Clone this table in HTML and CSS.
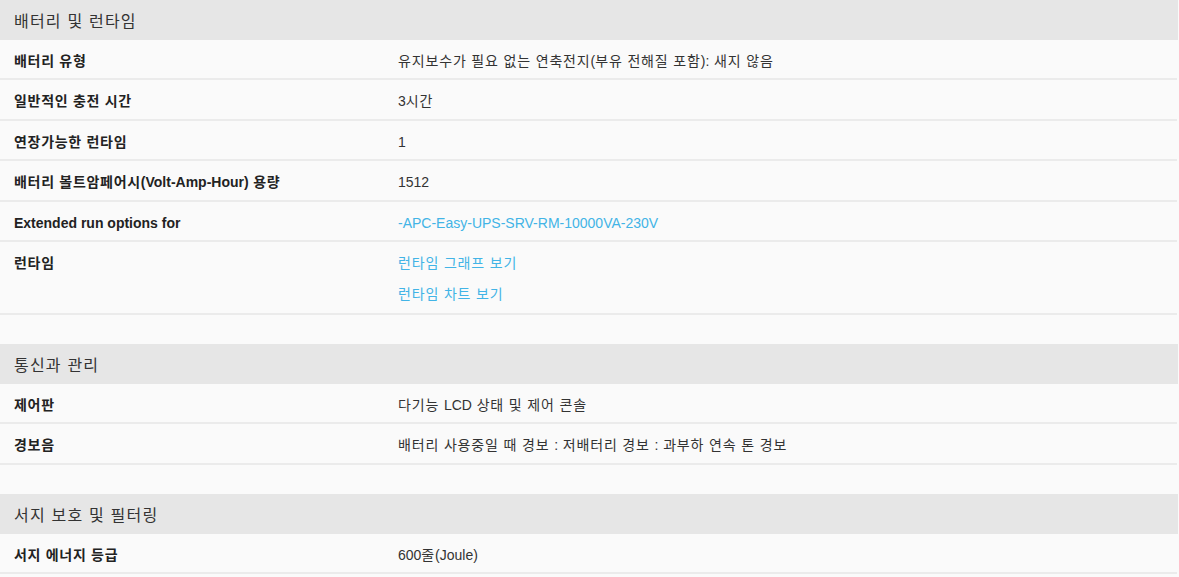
FILE: index.html
```html
<!DOCTYPE html>
<html lang="ko">
<head>
<meta charset="utf-8">
<link rel="stylesheet" href="styles.css">
</head>
<body>
<div class="specs">
  <section class="group">
    <h2 class="group-title">배터리 및 런타임</h2>
    <div class="row"><div class="label">배터리 유형</div><div class="value">유지보수가 필요 없는 연축전지<span class="lat">(</span>부유 전해질 포함<span class="lat">):</span> 새지 않음</div></div>
    <div class="row"><div class="label">일반적인 충전 시간</div><div class="value"><span class="lat">3</span>시간</div></div>
    <div class="row"><div class="label">연장가능한 런타임</div><div class="value"><span class="lat">1</span></div></div>
    <div class="row"><div class="label">배터리 볼트암페어시<span class="lat">(Volt-Amp-Hour)</span> 용량</div><div class="value"><span class="lat">1512</span></div></div>
    <div class="row"><div class="label lat">Extended run options for</div><div class="value lat"><a class="link" href="#">-APC-Easy-UPS-SRV-RM-10000VA-230V</a></div></div>
    <div class="row"><div class="label">런타임</div><div class="value links"><a class="link" href="#">런타임 그래프 보기</a><a class="link" href="#">런타임 차트 보기</a></div></div>
  </section>
  <section class="group">
    <h2 class="group-title">통신과 관리</h2>
    <div class="row"><div class="label">제어판</div><div class="value">다기능 <span class="lat">LCD</span> 상태 및 제어 콘솔</div></div>
    <div class="row"><div class="label">경보음</div><div class="value">배터리 사용중일 때 경보 <span class="lat">:</span> 저배터리 경보 <span class="lat">:</span> 과부하 연속 톤 경보</div></div>
  </section>
  <section class="group">
    <h2 class="group-title">서지 보호 및 필터링</h2>
    <div class="row"><div class="label">서지 에너지 등급</div><div class="value"><span class="lat">600</span>줄<span class="lat">(Joule)</span></div></div>
  </section>
</div>
</body>
</html>
```

FILE: styles.css
```css
html, body {
  margin: 0;
  padding: 0;
  background: #fafafa;
}
body {
  font-family: "Liberation Sans", "Noto Sans CJK KR", sans-serif;
  color: #333;
  font-size: 14px;
}
.lat {
  letter-spacing: 0 !important;
}
.specs {
  width: 1178px;
  display: flex;
  flex-direction: column;
  gap: 29px;
}
.group {
  display: flex;
  flex-direction: column;
}
.group-title {
  margin: 0;
  height: 40px;
  display: flex;
  align-items: center;
  padding: 0 14px;
  background: #e6e6e6;
  font-size: 16px;
  font-weight: normal;
  color: #333;
  letter-spacing: 0.075em;
}
.row {
  display: grid;
  grid-template-columns: 384px 1fr;
  border-bottom: 2px solid #ebebeb;
  margin-right: 1px;
}
.label, .value {
  padding: 11px 14px 7px;
  line-height: 20.4px;
}
.label {
  font-weight: bold;
  color: #222;
  letter-spacing: 0.05em;
}
.value {
  color: #333;
  letter-spacing: 0.06em;
}
.links {
  display: flex;
  flex-direction: column;
  gap: 11px;
  padding-bottom: 8px;
}
.link {
  color: #42b4e6;
  text-decoration: none;
}
```
